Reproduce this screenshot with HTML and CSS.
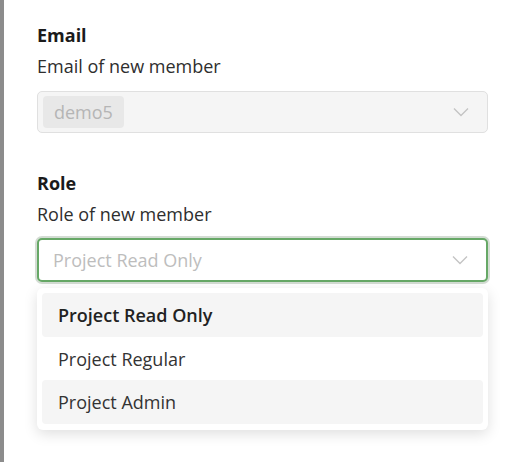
FILE: index.html
```html
<!DOCTYPE html>
<html>
<head>
<meta charset="utf-8">
<link rel="stylesheet" href="styles.css">
</head>
<body>
<div class="page">
  <div class="bar"></div>
  <div class="content">
    <div class="field">
      <div class="label">Email</div>
      <div class="desc">Email of new member</div>
      <div class="select disabled">
        <span class="chip">demo5</span>
        <svg class="chev" width="16" height="10" viewBox="0 0 16 10"><path d="M1 1.5 L8 8.5 L15 1.5" fill="none" stroke="#c4c4c4" stroke-width="1.4"/></svg>
      </div>
    </div>
    <div class="field role">
      <div class="label">Role</div>
      <div class="desc">Role of new member</div>
      <div class="select focused">
        <span class="placeholder">Project Read Only</span>
        <svg class="chev" width="16" height="10" viewBox="0 0 16 10"><path d="M1 1.5 L8 8.5 L15 1.5" fill="none" stroke="#c4c4c4" stroke-width="1.4"/></svg>
      </div>
      <div class="menu">
        <div class="item selected">Project Read Only</div>
        <div class="item">Project Regular</div>
        <div class="item hover">Project Admin</div>
      </div>
    </div>
  </div>
</div>
</body>
</html>
```
FILE: styles.css
```css
html, body {
  margin: 0;
  padding: 0;
  background: #ffffff;
  font-family: "Open Sans", "Noto Sans", sans-serif;
}
.page {
  display: flex;
  height: 462px;
}
.bar {
  width: 4px;
  background: #8c8c8c;
  flex: none;
}
.content {
  flex: 1;
  padding: 23px 24px 0 33px;
}
.label {
  font-size: 18px;
  line-height: 24px;
  font-weight: 700;
  color: #1b1b1b;
}
.desc {
  font-size: 18px;
  line-height: 24px;
  color: #2e2e2e;
  margin-top: 7px;
}
.select {
  margin-top: 13px;
  height: 42px;
  box-sizing: border-box;
  border-radius: 5px;
  display: flex;
  align-items: center;
  justify-content: space-between;
}
.select.disabled {
  border: 1px solid #e0e0e0;
  background: #f5f5f5;
  padding: 0 18px 0 5px;
}
.chip {
  background: #e8e8e8;
  border-radius: 4px;
  height: 32px;
  line-height: 32px;
  padding: 0 11px;
  font-size: 18px;
  color: #b5b5b5;
}
.field.role {
  margin-top: 38px;
}
.select.focused {
  margin-top: 12px;
  height: 44px;
  border: 2px solid #66a866;
  box-shadow: 0 0 0 2px rgba(110, 140, 110, 0.3);
  background: #ffffff;
  padding: 0 18px 0 14px;
}
.placeholder {
  font-size: 18px;
  color: #bdbdbd;
}
.menu {
  margin-top: 6px;
  background: #ffffff;
  border-radius: 6px;
  box-shadow: 0 4px 14px rgba(0, 0, 0, 0.13);
  padding: 5px 5px 6px;
  display: flex;
  flex-direction: column;
}
.item {
  height: 43.5px;
  box-sizing: border-box;
  padding-top: 2px;
  line-height: 41.5px;
  padding-left: 16px;
  border-radius: 4px;
  font-size: 18px;
  color: #333333;
}
.item.selected {
  background: #f5f5f5;
  font-weight: 600;
  color: #222222;
}
.item.hover {
  background: #f5f5f5;
}
```
